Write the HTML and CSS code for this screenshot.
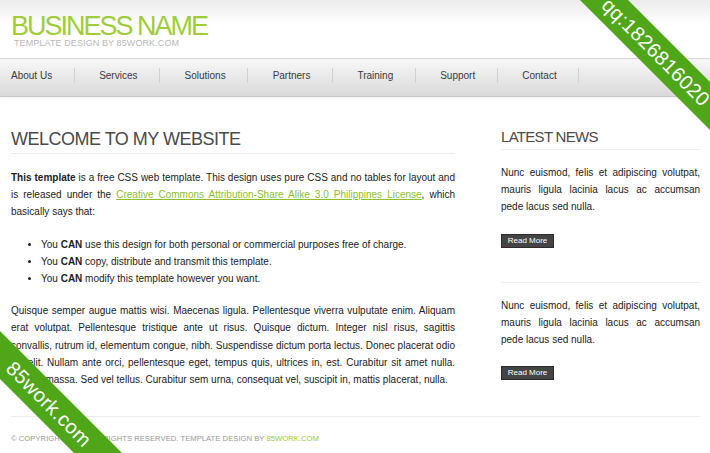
FILE: index.html
```html
<!DOCTYPE html>
<html lang="en">
<head>
<meta charset="utf-8">
<title>Business Name</title>
<link rel="stylesheet" href="styles.css">
</head>
<body>
<header class="header">
  <h1 class="logo-title">BUSINESS NAME</h1>
  <p class="logo-sub">TEMPLATE DESIGN BY 85WORK.COM</p>
</header>
<nav class="nav">
  <ul class="nav-list">
    <li><a href="#">About Us</a></li>
    <li><a href="#">Services</a></li>
    <li><a href="#">Solutions</a></li>
    <li><a href="#">Partners</a></li>
    <li><a href="#">Training</a></li>
    <li><a href="#">Support</a></li>
    <li><a href="#">Contact</a></li>
  </ul>
</nav>
<div class="content">
  <main class="main">
    <h2 class="main-title">WELCOME TO MY WEBSITE</h2>
    <p class="text"><strong>This template</strong> is a free CSS web template. This design uses pure CSS and no tables for layout and is released under the <a class="green-link" href="#">Creative Commons Attribution-Share Alike 3.0 Philippines License</a>, which basically says that:</p>
    <ul class="bullets">
      <li>You <strong>CAN</strong> use this design for both personal or commercial purposes free of charge.</li>
      <li>You <strong>CAN</strong> copy, distribute and transmit this template.</li>
      <li>You <strong>CAN</strong> modify this template however you want.</li>
    </ul>
    <p class="text">Quisque semper augue mattis wisi. Maecenas ligula. Pellentesque viverra vulputate enim. Aliquam erat volutpat. Pellentesque tristique ante ut risus. Quisque dictum. Integer nisl risus, sagittis convallis, rutrum id, elementum congue, nibh. Suspendisse dictum porta lectus. Donec placerat odio vel elit. Nullam ante orci, pellentesque eget, tempus quis, ultrices in, est. Curabitur sit amet nulla. Nam in massa. Sed vel tellus. Curabitur sem urna, consequat vel, suscipit in, mattis placerat, nulla.</p>
  </main>
  <aside class="sidebar">
    <h2 class="side-title">LATEST NEWS</h2>
    <div class="news-item">
      <p class="text news-text">Nunc euismod, felis et adipiscing volutpat, mauris ligula lacinia lacus ac accumsan pede lacus sed nulla.</p>
      <a class="btn" href="#">Read More</a>
    </div>
    <div class="news-item">
      <p class="text news-text">Nunc euismod, felis et adipiscing volutpat, mauris ligula lacinia lacus ac accumsan pede lacus sed nulla.</p>
      <a class="btn" href="#">Read More</a>
    </div>
  </aside>
</div>
<footer class="footer">© COPYRIGHT 2010. ALL RIGHTS RESERVED. TEMPLATE DESIGN BY <a class="footer-link" href="#">85WORK.COM</a></footer>
<div class="ribbon ribbon-tr">qq:1826816020</div>
<div class="ribbon ribbon-bl">85work.com</div>
</body>
</html>
```
FILE: styles.css
```css
* { box-sizing: border-box; }
html, body { margin: 0; padding: 0; overflow: hidden; }
body {
  position: relative;
  width: 710px;
  height: 453px;
  font-family: "Liberation Sans", Arial, sans-serif;
  font-size: 10px;
  color: #222;
  background: #fff;
}
.header {
  height: 58px;
  padding: 13px 0 0 11px;
  background: linear-gradient(#ececec, #fff 24px);
}
.logo-title {
  margin: 0;
  font-size: 27px;
  font-weight: normal;
  line-height: 26px;
  letter-spacing: -2px;
  color: #9fcd3a;
}
.logo-sub {
  margin: -1px 0 0 3px;
  font-size: 9px;
  line-height: 10px;
  letter-spacing: 0.1px;
  color: #b8b8b8;
}
.nav {
  height: 39px;
  border-top: 1px solid #d6d6d6;
  border-bottom: 1px solid #c8c8c8;
  background: linear-gradient(#f8f8f8, #d9d9d9);
  box-shadow: 0 1px 2px rgba(0,0,0,0.08);
}
.nav-list {
  list-style: none;
  margin: 0;
  padding: 0 0 4px 11px;
  height: 100%;
  display: flex;
  align-items: center;
}
.nav-list a {
  display: block;
  padding: 0 21.5px 0 24.5px;
  border-right: 1px solid #d2d2d2;
  line-height: 15px;
  color: #3a3a3a;
  text-decoration: none;
}
.nav-list li:first-child a { padding-left: 0; }
.content {
  display: flex;
  align-items: flex-start;
  gap: 46px;
  padding: 31px 10px 0 11px;
}
.main { width: 444px; }
.sidebar { width: 199px; }
.main-title {
  margin: 0 0 15px;
  padding-bottom: 3px;
  border-bottom: 1px solid #ececec;
  font-size: 18px;
  font-weight: normal;
  line-height: 22px;
  letter-spacing: -0.5px;
  color: #4a4a4a;
}
.text {
  margin: 0 0 15px;
  line-height: 17.2px;
  text-align: justify;
}
.green-link { color: #8cbf2c; }
.bullets {
  margin: 0 0 15px;
  padding-left: 30px;
  line-height: 17.2px;
}
.side-title {
  margin: 0;
  padding-bottom: 3px;
  border-bottom: 1px solid #ececec;
  font-size: 15px;
  font-weight: normal;
  line-height: 18px;
  letter-spacing: -0.7px;
  color: #4a4a4a;
}
.news-item {
  padding: 14px 0 34px;
  border-bottom: 1px solid #ececec;
}
.news-item:last-child { border-bottom: none; }
.news-text { margin-bottom: 18px; }
.btn {
  display: block;
  width: 53px;
  height: 14px;
  line-height: 12px;
  border: 1px solid #2c2c2c;
  background: #444;
  color: #fff;
  font-size: 8px;
  text-align: center;
  text-decoration: none;
}
.footer {
  margin: 2px 10px 0 11px;
  padding-top: 17px;
  border-top: 1px solid #ececec;
  font-size: 7.7px;
  line-height: 10px;
  color: #999;
}
.footer-link { color: #99cc33; text-decoration: none; }
.ribbon {
  position: absolute;
  width: 260px;
  height: 34px;
  line-height: 34px;
  text-align: center;
  background: #4fa619;
  color: #fff;
  font-size: 20px;
  letter-spacing: 0.3px;
  transform: rotate(45deg);
}
.ribbon-tr { left: 526px; top: 35px; }
.ribbon-bl { left: -81px; top: 387px; }
```
